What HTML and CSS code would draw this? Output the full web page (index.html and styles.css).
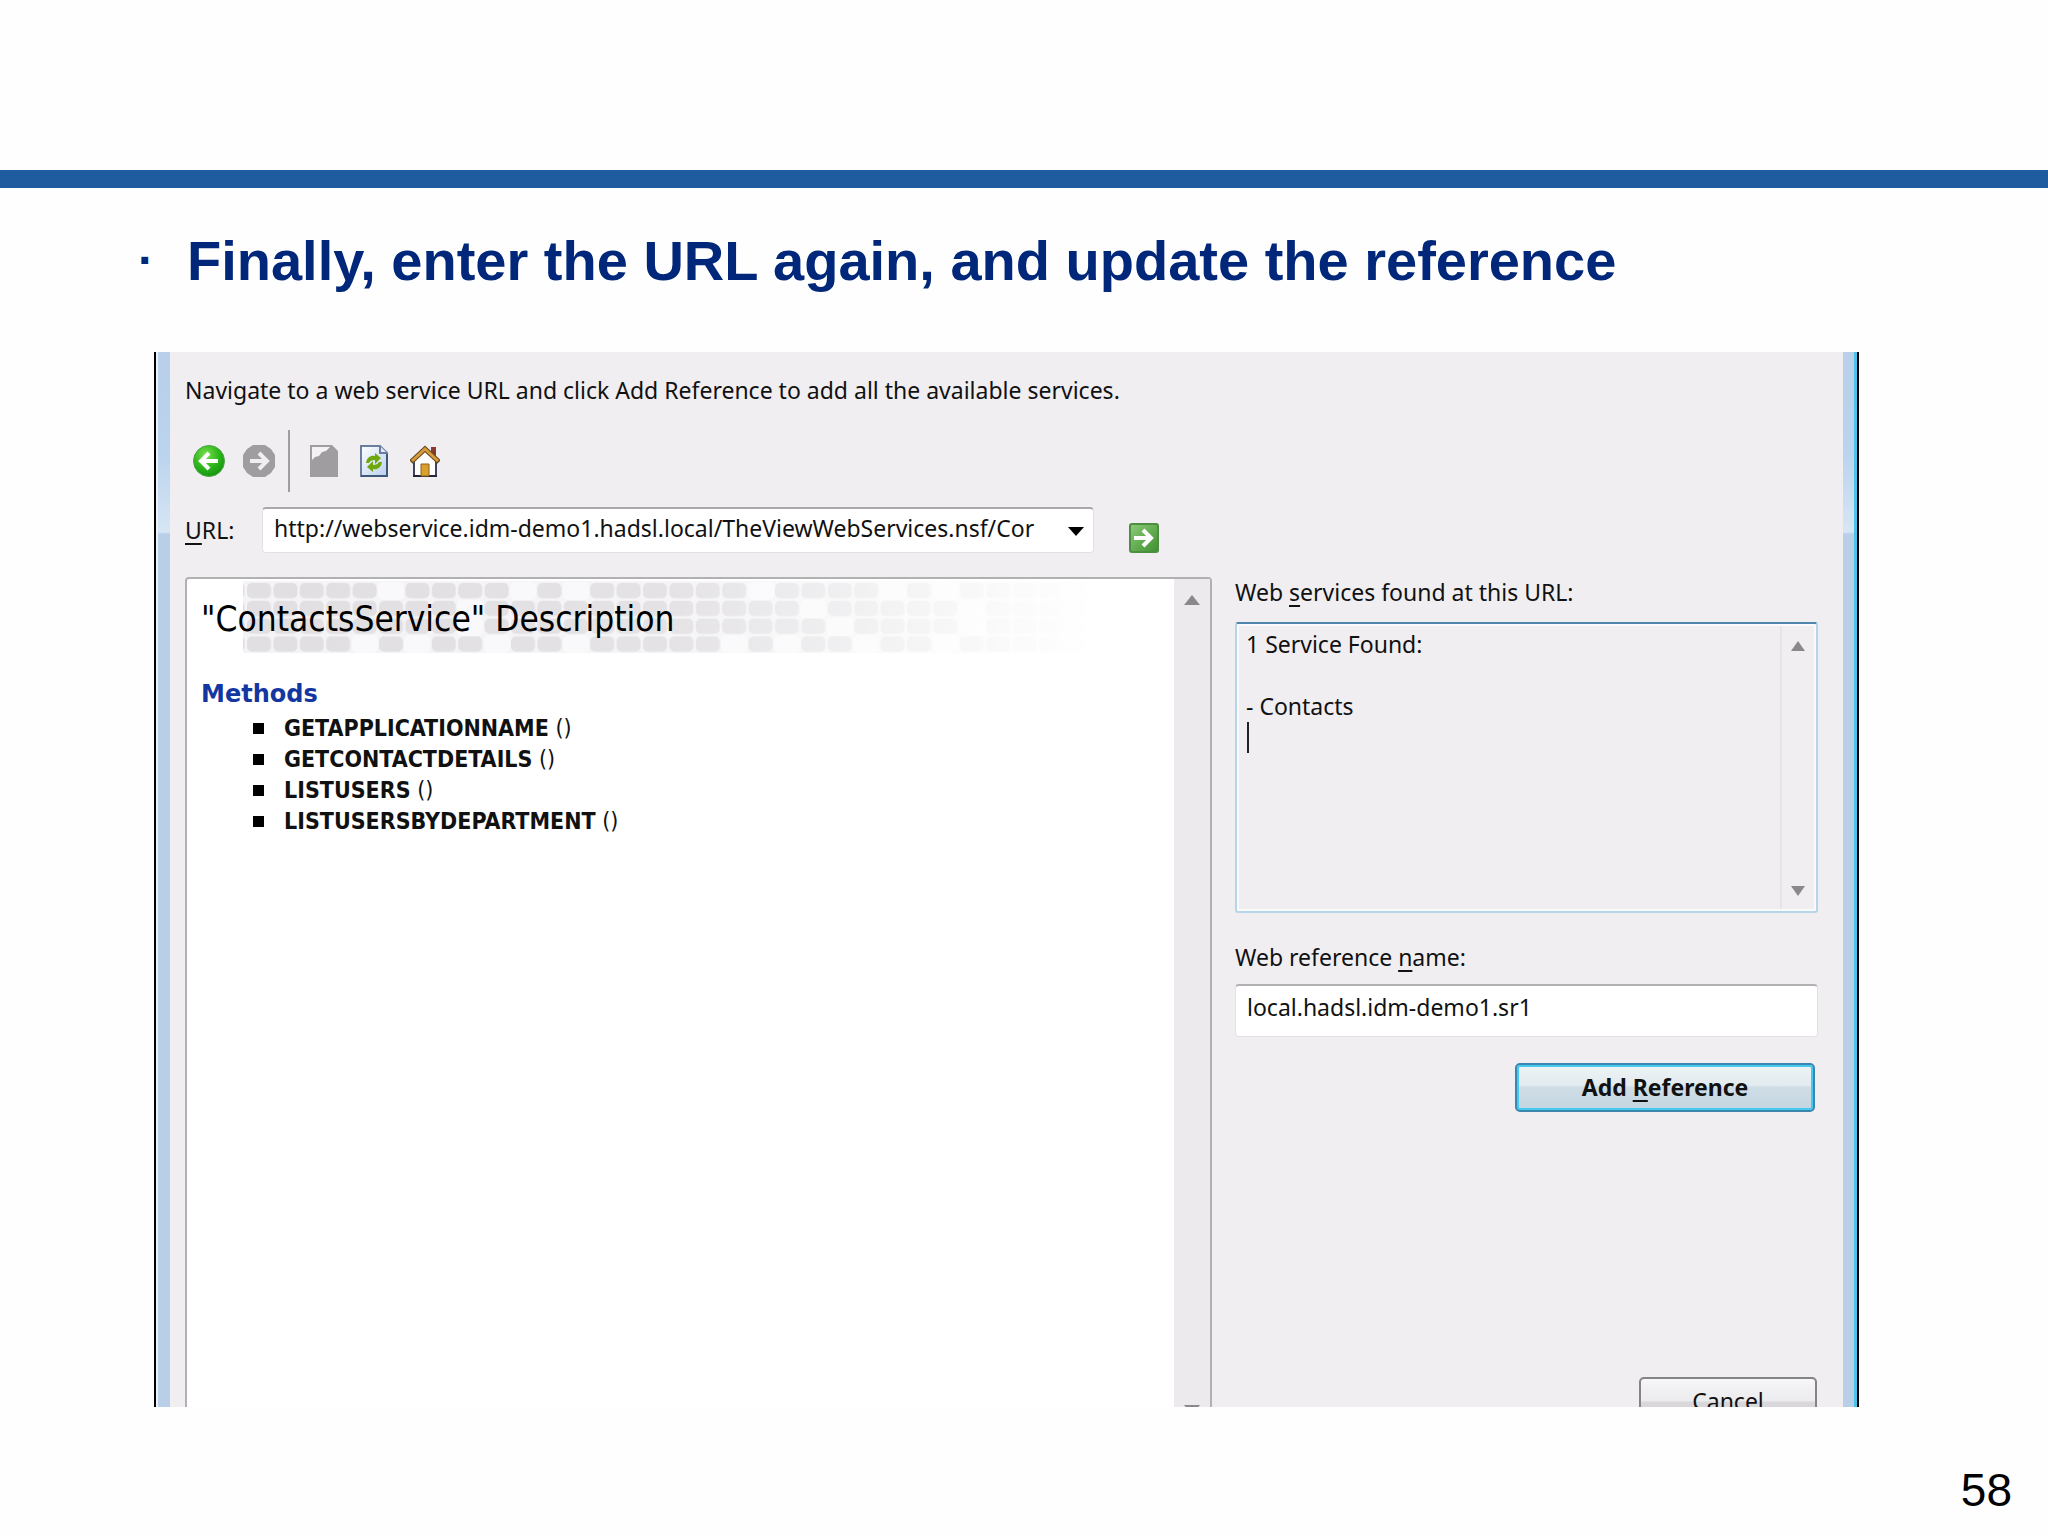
FILE: index.html
```html
<!DOCTYPE html>
<html lang="en">
<head>
    <meta charset="UTF-8">
    <meta name="viewport" content="width=device-width, initial-scale=1.0">
    <title>Add Web Reference</title>
    <link rel="stylesheet" href="styles.css">
</head>
<body>

    <header class="top"></header>

    <div class="heading">
        <span class="dot">·</span>
        <h1>Finally, enter the URL again, and update the reference</h1>
    </div>

    <main class="dialog">
        <div class="edge edge-left"></div>

        <div class="content">
            <p class="hint">Navigate to a web service URL and click Add Reference to add all the available services.</p>

            <div class="toolbar">
                <button class="icon-button" aria-label="Back">
                    <svg width="32" height="32" viewBox="0 0 32 32">
                        <defs>
                            <radialGradient id="green" cx="0.4" cy="0.3" r="0.8">
                                <stop offset="0" stop-color="#7be04e"/>
                                <stop offset="0.5" stop-color="#2fb81c"/>
                                <stop offset="1" stop-color="#0f8a0c"/>
                            </radialGradient>
                        </defs>
                        <circle cx="16" cy="16" r="15.5" fill="url(#green)" stroke="#4fa545"/>
                        <path d="M25 16H9M16 8l-8 8 8 8" fill="none" stroke="#fff" stroke-width="4"/>
                    </svg>
                </button>
                <button class="icon-button" aria-label="Forward">
                    <svg width="32" height="32" viewBox="0 0 32 32">
                        <path d="M10 0h12l6 4 4 6v12l-4 6-6 4H10l-6-4-4-6V10l4-6z" fill="#a09da0"/>
                        <path d="M7 16h17M16 8l8 8-8 8" fill="none" stroke="#f0eef1" stroke-width="4"/>
                    </svg>
                </button>
                <span class="separator"></span>
                <button class="icon-button" aria-label="Stop">
                    <svg width="28" height="32" viewBox="0 0 28 32">
                        <path d="M0 0h22l6 6v26H0z" fill="#a09da0"/>
                        <path d="M2 2h18l-4 4-4 1-3 4-4 1-3 3z" fill="#f4f2f5"/>
                    </svg>
                </button>
                <button class="icon-button" aria-label="Refresh">
                    <svg width="28" height="32" viewBox="0 0 28 32">
                        <defs>
                            <linearGradient id="paper" x1="0" y1="0" x2="1" y2="1">
                                <stop offset="0" stop-color="#ffffff"/>
                                <stop offset="1" stop-color="#b9cfee"/>
                            </linearGradient>
                        </defs>
                        <path d="M1 1h19l7 7v23H1z" fill="url(#paper)" stroke="#6a7f9f" stroke-width="2"/>
                        <path d="M1 31h26V9" fill="none" stroke="#405878" stroke-width="2"/>
                        <path d="M20 1v7h7" fill="#dfe8f6" stroke="#6a7f9f" stroke-width="2"/>
                        <path d="M6 18c1-6 5-8 9-7V8l6 5-6 6v-4c-3 0-5 1-6 3z" fill="#6fa80d"/>
                        <path d="M22 17c-1 6-5 8-9 7v3l-6-5 6-6v4c3 0 5-1 6-3z" fill="#6fa80d"/>
                    </svg>
                </button>
                <button class="icon-button" aria-label="Home">
                    <svg width="30" height="32" viewBox="0 0 30 32">
                        <path d="M21 2h5v11l-5-5z" fill="#8a3a2c"/>
                        <path d="M4 15L15 5l11 10v16H4z" fill="#fff" stroke="#3d4560" stroke-width="2"/>
                        <path d="M3 31h24" stroke="#22283c" stroke-width="2"/>
                        <path d="M1 17L15 4l14 13" fill="none" stroke="#6b4a1c" stroke-width="5"/>
                        <path d="M2 16L15 4l13 12" fill="none" stroke="#d69b3c" stroke-width="3"/>
                        <path d="M11 19h8v12h-8z" fill="#d9a02e" stroke="#8c6216"/>
                    </svg>
                </button>
            </div>

            <div class="url-row">
                <label for="url"><u>U</u>RL:</label>
                <div class="combo">
                    <select id="url">
                        <option>http://webservice.idm-demo1.hadsl.local/TheViewWebServices.nsf/Cor</option>
                    </select>
                    <svg class="combo-arrow" width="16" height="9" viewBox="0 0 16 9"><path d="M0 0h16L8 9z" fill="#000"/></svg>
                </div>
                <button class="icon-button go" aria-label="Go">
                    <svg width="30" height="30" viewBox="0 0 30 30">
                        <defs>
                            <linearGradient id="go" x1="0" y1="0" x2="1" y2="1">
                                <stop offset="0" stop-color="#8ccb78"/>
                                <stop offset="1" stop-color="#3f9030"/>
                            </linearGradient>
                        </defs>
                        <rect x="1" y="1" width="28" height="28" rx="2" fill="url(#go)" stroke="#4c8f40" stroke-width="2"/>
                        <path d="M5 15h17M14 7l8 8-8 8" fill="none" stroke="#fff" stroke-width="4"/>
                    </svg>
                </button>
            </div>

            <div class="panes">
                <section class="browser">
                    <div class="page">
                        <!-- tile banner behind the title -->
                        <svg class="banner" width="850" height="72" viewBox="0 0 850 72">
                            <defs>
                                <pattern id="tiles" x="3" y="1" width="26.4" height="17.8" patternUnits="userSpaceOnUse">
                                    <rect x="1" y="1" width="24" height="15.4" rx="5" fill="#e1dfe2"/>
                                </pattern>
                                <linearGradient id="fade">
                                    <stop offset="0" stop-color="#fff" stop-opacity="0"/>
                                    <stop offset="0.5" stop-color="#fff" stop-opacity="0.1"/>
                                    <stop offset="0.8" stop-color="#fff" stop-opacity="0.7"/>
                                    <stop offset="1" stop-color="#fff"/>
                                </linearGradient>
                            </defs>
                            <rect width="850" height="72" fill="#f4f3f5"/>
                            <rect width="850" height="72" fill="url(#tiles)"/>
                            <g fill="#f9f8fa">
                                <rect x="135" y="1" width="26" height="18" rx="5"/>
                                <rect x="267" y="1" width="26" height="18" rx="5"/>
                                <rect x="320" y="1" width="26" height="18" rx="5"/>
                                <rect x="505" y="1" width="26" height="18" rx="5"/>
                                <rect x="637" y="1" width="26" height="18" rx="5"/>
                                <rect x="690" y="1" width="26" height="18" rx="5"/>
                                <rect x="214" y="19" width="26" height="18" rx="5"/>
                                <rect x="557" y="19" width="26" height="18" rx="5"/>
                                <rect x="716" y="19" width="26" height="18" rx="5"/>
                                <rect x="214" y="37" width="26" height="18" rx="5"/>
                                <rect x="584" y="37" width="26" height="18" rx="5"/>
                                <rect x="716" y="37" width="26" height="18" rx="5"/>
                                <rect x="109" y="54" width="26" height="18" rx="5"/>
                                <rect x="161" y="54" width="26" height="18" rx="5"/>
                                <rect x="241" y="54" width="26" height="18" rx="5"/>
                                <rect x="320" y="54" width="26" height="18" rx="5"/>
                                <rect x="478" y="54" width="26" height="18" rx="5"/>
                                <rect x="531" y="54" width="26" height="18" rx="5"/>
                                <rect x="610" y="54" width="26" height="18" rx="5"/>
                                <rect x="690" y="54" width="26" height="18" rx="5"/>
                            </g>
                            <rect width="850" height="72" fill="url(#fade)"/>
                        </svg>
                        <h2>"ContactsService" Description</h2>
                        <h3>Methods</h3>
                        <ul class="methods">
                            <li><b>GETAPPLICATIONNAME</b> ()</li>
                            <li><b>GETCONTACTDETAILS</b> ()</li>
                            <li><b>LISTUSERS</b> ()</li>
                            <li><b>LISTUSERSBYDEPARTMENT</b> ()</li>
                        </ul>
                    </div>
                    <div class="scrollbar">
                        <svg width="16" height="10" viewBox="0 0 16 10"><path d="M8 0l8 10H0z" fill="#8a888b"/></svg>
                        <svg width="16" height="10" viewBox="0 0 16 10"><path d="M0 0h16L8 10z" fill="#8a888b"/></svg>
                    </div>
                </section>

                <aside class="side">
                    <label for="services">Web <u>s</u>ervices found at this URL:</label>
                    <div class="services">
                        <textarea id="services" readonly>1 Service Found:

- Contacts
</textarea>
                        <span class="caret"></span>
                        <div class="scrollbar">
                            <svg width="14" height="10" viewBox="0 0 14 10"><path d="M7 0l7 10H0z" fill="#8a888b"/></svg>
                            <svg width="14" height="10" viewBox="0 0 14 10"><path d="M0 0h14L7 10z" fill="#8a888b"/></svg>
                        </div>
                    </div>

                    <label for="name">Web reference <u>n</u>ame:</label>
                    <input type="text" id="name" value="local.hadsl.idm-demo1.sr1">

                    <button class="add">Add <u>R</u>eference</button>
                    <button class="cancel">Cancel</button>
                </aside>
            </div>
        </div>

        <div class="edge edge-right"></div>
    </main>

    <footer class="page-number">58</footer>

</body>
</html>
```

FILE: styles.css
```css
* {
    box-sizing: border-box;
}

body {
    display: flex;
    flex-direction: column;
    height: 100vh;
    margin: 0;
    background-color: #fefefe;
    color: #111;
    font-family: "Noto Sans", "Open Sans", sans-serif;
    font-size: 23px;
    line-height: 31px;
}

h1, h2, h3, p, ul {
    margin: 0;
    padding: 0;
}

button, input, select, textarea {
    font: inherit;
    color: inherit;
}

svg {
    display: block;
}

u {
    text-underline-offset: 4px;
    text-decoration-thickness: 2px;
}

/* Slide heading */
.top {
    flex: none;
    height: 188px;
    border-bottom: 18px solid #1e5c9f;
}

.heading {
    display: flex;
    flex: none;
    height: 164px;
    padding: 32px 0 0 138px;
    color: #00277a;
    font-family: "Liberation Sans Narrow", "Arial Narrow", "Liberation Sans", sans-serif;
    font-size: 56px;
    font-weight: bold;
    line-height: 82px;
}

.heading h1 {
    font-size: inherit;
}

.dot {
    width: 49px;
    font-size: 48px;
}

/* Dialog */
.dialog {
    display: flex;
    flex: 1;
    min-height: 0;
    margin: 0 189px 0 154px;
    background-color: #f0eef1;
    overflow: hidden;
}

.edge {
    flex: none;
    width: 16px;
    background: linear-gradient(#b9cfea, #bad3ee 100px, #d6e6f4 180px, #b9cfe8 182px, #b9cfe8);
}

.edge-left {
    border-left: 2px solid #000;
    box-shadow: inset 2px 0 #eef2f8;
}

.edge-right {
    border-right: 2px solid #000;
    box-shadow: inset -3px 0 #4cc4ea;
}

.content {
    display: flex;
    flex: 1;
    flex-direction: column;
    padding: 23px 25px 0 15px;
}

.toolbar {
    display: flex;
    align-items: center;
    height: 62px;
    margin-top: 24px;
    padding-left: 8px;
    gap: 18px;
}

.icon-button {
    padding: 0;
    border: none;
    background: none;
    cursor: pointer;
}

.separator {
    width: 2px;
    height: 62px;
    margin: 0 2px 0 -5px;
    background-color: #a09da0;
}

.separator ~ .icon-button {
    margin-right: 4px;
}

.url-row {
    display: flex;
    align-items: center;
    height: 46px;
    margin-top: 15px;
}

.url-row label {
    width: 77px;
}

.combo {
    position: relative;
    width: 832px;
    margin-right: 35px;
}

.combo select {
    width: 100%;
    height: 46px;
    padding: 0 36px 4px 11px;
    border: 1px solid #e3e1e4;
    border-top: 2px solid #aaa8ab;
    border-radius: 4px;
    background-color: #fff;
    appearance: none;
}

.combo-arrow {
    position: absolute;
    top: 20px;
    right: 10px;
    pointer-events: none;
}

.go {
    align-self: flex-end;
}

.panes {
    display: flex;
    flex: 1;
    margin-top: 24px;
    gap: 23px;
}

/* Service description */
.browser {
    display: flex;
    flex: 1;
    height: 842px;
    border: 2px solid #b2b0b3;
    border-radius: 4px;
    background-color: #fff;
}

.page {
    position: relative;
    flex: 1;
    padding: 16px 0 0 14px;
    font-family: "DejaVu Sans Condensed", "DejaVu Sans", sans-serif;
}

.banner {
    position: absolute;
    top: 2px;
    left: 56px;
}

.page h2 {
    position: relative;
    color: #000;
    font-size: 35px;
    font-weight: normal;
    line-height: 48px;
}

.page h3 {
    margin-top: 36px;
    color: #1436a0;
    font-family: "DejaVu Sans", sans-serif;
    font-size: 24px;
}

.methods {
    margin-top: 3px;
    padding-left: 83px;
    list-style: none;
}

.methods li {
    position: relative;
}

.methods li::before {
    content: "";
    position: absolute;
    top: 10px;
    left: -31px;
    width: 11px;
    height: 11px;
    background-color: #000;
}

.scrollbar {
    display: flex;
    flex: none;
    flex-direction: column;
    align-items: center;
    justify-content: space-between;
    width: 36px;
    padding: 16px 0 2px;
    background-color: #eceaed;
}

/* Right column */
.side {
    display: flex;
    flex: none;
    flex-direction: column;
    width: 583px;
}

.services {
    position: relative;
    display: flex;
    height: 291px;
    margin: 14px 0 29px;
    border: 2px solid #b5d5e8;
    border-top-color: #4f86ae;
    border-radius: 3px;
    box-shadow: inset 0 0 0 2px #fafafa;
}

.services textarea {
    flex: 1;
    padding: 5px 9px;
    border: none;
    outline: none;
    background: none;
    resize: none;
    overflow: hidden;
}

.services .scrollbar {
    width: 34px;
    margin: 2px;
    padding: 15px 0 13px;
    border-left: 2px solid #e6e4e7;
    background: none;
}

.caret {
    position: absolute;
    top: 98px;
    left: 10px;
    width: 2px;
    height: 31px;
    background-color: #222;
}

.side input {
    height: 53px;
    margin-top: 11px;
    padding: 0 11px 8px;
    border: 1px solid #e3e1e4;
    border-top: 2px solid #b2b0b3;
    border-radius: 4px;
    background-color: #fff;
}

.add {
    align-self: flex-end;
    width: 300px;
    height: 49px;
    margin: 26px 3px 0 0;
    padding: 0;
    border: 2px solid #3a86ae;
    border-radius: 5px;
    background: linear-gradient(#eef3f5, #e2ebef 45%, #cfdde6 50%, #c3d5e0);
    box-shadow: inset 0 0 0 2px #46c8f0;
    font-weight: bold;
}

.cancel {
    align-self: flex-end;
    width: 178px;
    height: 49px;
    margin: 265px 1px 0 0;
    padding: 0;
    border: 2px solid #858386;
    border-radius: 5px;
    background: linear-gradient(#f6f5f7, #ecebed 48%, #dad8db 52%, #d0ced1);
}

.page-number {
    flex: none;
    height: 129px;
    padding: 57px 36px 0 0;
    color: #000;
    font-family: "Liberation Sans", Arial, sans-serif;
    font-size: 46px;
    line-height: 52px;
    text-align: right;
}
```
